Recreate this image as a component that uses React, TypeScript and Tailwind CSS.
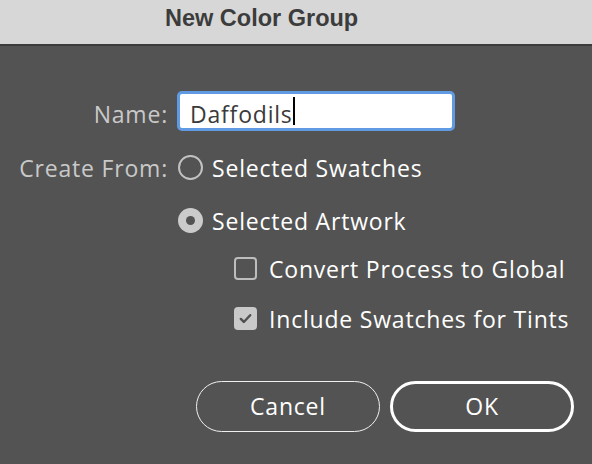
import { FC } from "react";

const Radio: FC<{ checked?: boolean }> = ({ checked }) =>
  checked ? (
    <span className="flex h-[25px] w-[25px] items-center justify-center rounded-full bg-[#cbcbcb]">
      <span className="h-[9px] w-[9px] rounded-full bg-[#535353]" />
    </span>
  ) : (
    <span className="h-[25px] w-[25px] rounded-full border-2 border-[#c2c2c2]" />
  );

const Checkbox: FC<{ checked?: boolean }> = ({ checked }) =>
  checked ? (
    <span className="flex h-[23px] w-[23px] items-center justify-center rounded-[4px] bg-[#c9c9c9]">
      <svg width="15" height="15" viewBox="0 0 16 16" fill="none">
        <path
          d="M3 8.5l3.2 3.2L13 4.5"
          stroke="#505050"
          strokeWidth="2.6"
          strokeLinecap="round"
          strokeLinejoin="round"
        />
      </svg>
    </span>
  ) : (
    <span className="h-[23px] w-[23px] rounded-[4px] border-2 border-[#bdbdbd]" />
  );

export default function App() {
  return (
    <div
      className="flex h-[464px] w-[592px] flex-col bg-[#535353] text-[23px] font-medium tracking-[0.8px]"
      style={{ fontFamily: "'Open Sans', 'Noto Sans', sans-serif" }}
    >
      <div className="flex h-[46px] items-center border-b-2 border-[#3b3b3b] bg-[#d7d7d7] pb-[6px] pl-[165px]">
        <h1
          className="text-[23.5px] font-bold tracking-normal text-[#3c3c3c]"
          style={{ fontFamily: "'Liberation Sans', Arial, sans-serif" }}
        >
          New Color Group
        </h1>
      </div>

      <div className="mt-[45px] flex h-[40px] items-center">
        <label className="w-[168px] pt-[6px] text-right text-[#c9c9c9]">Name:</label>
        <div className="ml-[9px] flex h-[40px] w-[278px] items-center rounded-[5px] border-[3px] border-[#5f9ae2] bg-white pl-[10px] text-[#3a3a3a]">
          <span className="pt-[6px]">Daffodils</span>
          <span className="h-[28px] w-[2px] bg-black" />
        </div>
      </div>

      <div className="mt-[23px] flex h-[26px] items-center">
        <span className="w-[168px] pt-[2px] text-right text-[#c9c9c9]">Create From:</span>
        <div className="ml-[10px] flex items-center gap-[9px] text-white">
          <Radio />
          <span className="pt-[2px]">Selected Swatches</span>
        </div>
      </div>

      <div className="mt-[27px] flex h-[26px] items-center pl-[178px]">
        <div className="flex items-center gap-[9px] text-white">
          <Radio checked />
          <span className="pt-[2px]">Selected Artwork</span>
        </div>
      </div>

      <div className="mt-[22px] flex h-[26px] items-center pl-[234px]">
        <div className="flex items-center gap-[12px] text-white">
          <Checkbox />
          <span className="pt-[2px]">Convert Process to Global</span>
        </div>
      </div>

      <div className="mt-[24px] flex h-[26px] items-center pl-[234px]">
        <div className="flex items-center gap-[12px] text-white">
          <Checkbox checked />
          <span className="pt-[2px]">Include Swatches for Tints</span>
        </div>
      </div>

      <div className="mt-[50px] flex justify-end gap-[10px] pr-[18px]">
        <button className="h-[51px] w-[184px] rounded-full border-[1.5px] border-[#f0f0f0] text-white">
          Cancel
        </button>
        <button className="h-[51px] w-[184px] rounded-full border-[3px] border-white text-white">
          OK
        </button>
      </div>
    </div>
  );
}
